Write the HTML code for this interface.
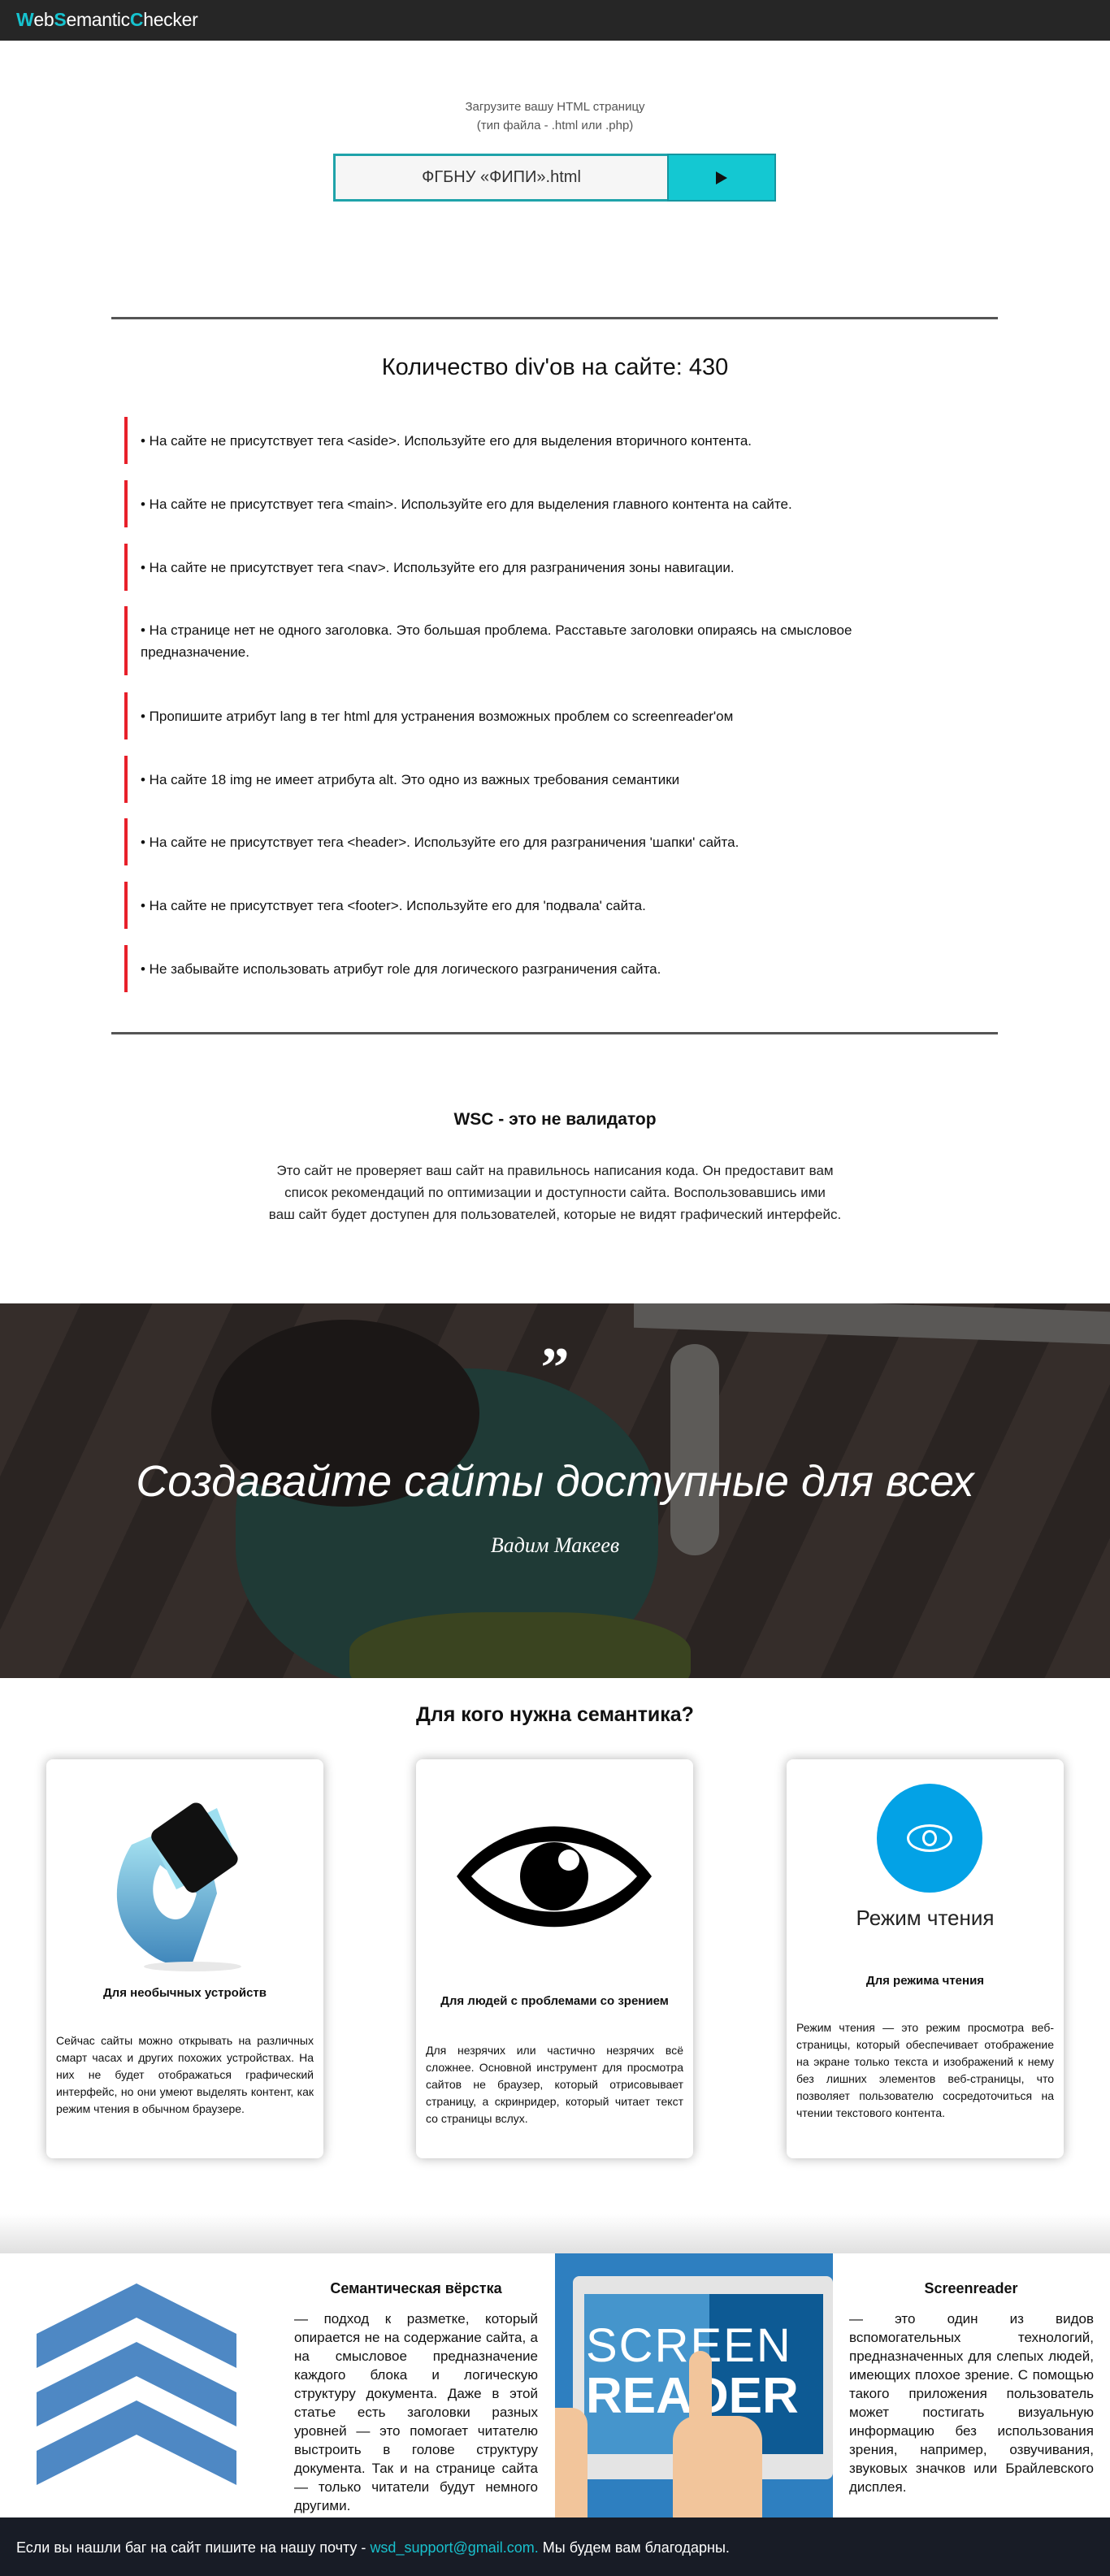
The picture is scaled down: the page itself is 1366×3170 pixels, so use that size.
<!DOCTYPE html>
<html><head><meta charset="utf-8">
<style>
*{margin:0;padding:0;box-sizing:border-box}
body{width:1366px;height:3170px;position:relative;font-family:"Liberation Sans","Noto Sans CJK SC",sans-serif;color:#111;background:#fff;overflow:hidden}
.abs{position:absolute}
.hdr{left:0;top:0;width:1366px;height:50px;background:#262626}
.logo{left:20px;top:11px;font-size:23px;color:#fff;letter-spacing:-0.3px}
.logo b{color:#16c3cf;font-weight:bold}
.c{text-align:center}
.item{left:153px;width:1000px;border-left:4px solid #e8202a;padding-left:16px;font-size:17px;display:flex;align-items:center;line-height:27px}
.card{width:341px;height:491px;background:#fff;border-radius:8px;box-shadow:0 0 14px rgba(0,0,0,.3)}
.ctitle{font-weight:bold;font-size:15px;text-align:center;position:absolute;left:0;width:100%}
.ctext{position:absolute;left:12px;right:12px;font-size:14px;line-height:21px;text-align:justify}
.jt{font-size:17px;line-height:23px;text-align:justify}
</style></head><body>
<div class="abs hdr"></div>
<div class="abs logo"><b>W</b>eb<b>S</b>emantic<b>C</b>hecker</div>

<div class="abs c" style="left:0;width:1366px;top:120px;font-size:15px;color:#555;line-height:23px">Загрузите вашу HTML страницу<br>(тип файла - .html или .php)</div>
<div class="abs" style="left:410px;top:189px;width:411px;height:59px;background:#f6f6f6;border:3px solid #1fa3aa;border-right:none;text-align:center;line-height:53px;font-size:20px;color:#333">ФГБНУ «ФИПИ».html</div>
<div class="abs" style="left:821px;top:189px;width:134px;height:59px;background:#14c8d2;border:2px solid #1596a0"><div style="position:absolute;left:58px;top:20px;border-left:14px solid #111;border-top:8px solid transparent;border-bottom:8px solid transparent"></div></div>

<div class="abs" style="left:137px;top:390px;width:1091px;height:3px;background:#555"></div>
<div class="abs c" style="left:0;width:1366px;top:436px;font-size:29px">Количество div'ов на сайте: 430</div>

<div class="abs item" style="top:513px;height:58px">• На сайте не присутствует тега &lt;aside&gt;. Используйте его для выделения вторичного контента.</div>
<div class="abs item" style="top:591px;height:58px">• На сайте не присутствует тега &lt;main&gt;. Используйте его для выделения главного контента на сайте.</div>
<div class="abs item" style="top:669px;height:58px">• На сайте не присутствует тега &lt;nav&gt;. Используйте его для разграничения зоны навигации.</div>
<div class="abs item" style="top:746px;height:85px;width:960px">• На странице нет не одного заголовка. Это большая проблема. Расставьте заголовки опираясь на смысловое предназначение.</div>
<div class="abs item" style="top:852px;height:58px">• Пропишите атрибут lang в тег html для устранения возможных проблем со screenreader'ом</div>
<div class="abs item" style="top:930px;height:58px">• На сайте 18 img не имеет атрибута alt. Это одно из важных требования семантики</div>
<div class="abs item" style="top:1007px;height:58px">• На сайте не присутствует тега &lt;header&gt;. Используйте его для разграничения 'шапки' сайта.</div>
<div class="abs item" style="top:1085px;height:58px">• На сайте не присутствует тега &lt;footer&gt;. Используйте его для 'подвала' сайта.</div>
<div class="abs item" style="top:1163px;height:58px">• Не забывайте использовать атрибут role для логического разграничения сайта.</div>
<div class="abs" style="left:137px;top:1270px;width:1091px;height:3px;background:#555"></div>

<div class="abs c" style="left:0;width:1366px;top:1366px;font-size:21px;font-weight:bold">WSC - это не валидатор</div>
<div class="abs c" style="left:0;width:1366px;top:1427px;font-size:17px;line-height:27px;color:#222">Это сайт не проверяет ваш сайт на правильнось написания кода. Он предоставит вам<br>список рекомендаций по оптимизации и доступности сайта. Воспользовавшись ими<br>ваш сайт будет доступен для пользователей, которые не видят графический интерфейс.</div>

<div class="abs" style="left:0;top:1604px;width:1366px;height:461px;background:#2e2826;overflow:hidden">
 <div class="abs" style="left:0;top:0;width:1366px;height:461px;background:repeating-linear-gradient(115deg,#352d2a 0 90px,#2a2422 90px 170px)"></div>
 <div class="abs" style="left:780px;top:0;width:586px;height:40px;background:#5a5856;transform:skewY(2deg)"></div>
 <div class="abs" style="left:290px;top:80px;width:520px;height:400px;border-radius:45%;background:#1f3a36"></div>
 <div class="abs" style="left:260px;top:20px;width:330px;height:230px;border-radius:50%;background:#1b1716"></div>
 <div class="abs" style="left:430px;top:380px;width:420px;height:120px;border-radius:40%;background:#3a4420"></div>
 <div class="abs" style="left:825px;top:50px;width:60px;height:260px;border-radius:30px;background:#5d5b58"></div>
 <div class="abs c" style="left:0;width:1366px;top:40px;color:#fff;font-size:70px;font-family:'Liberation Serif',serif;font-weight:bold">”</div>
 <div class="abs c" style="left:0;width:1366px;top:188px;color:#fff;font-size:54px;font-style:italic">Создавайте сайты доступные для всех</div>
 <div class="abs c" style="left:0;width:1366px;top:283px;color:#fff;font-size:26px;font-style:italic;font-family:'Liberation Serif',serif">Вадим Макеев</div>
</div>

<div class="abs c" style="left:0;width:1366px;top:2096px;font-size:25px;font-weight:bold">Для кого нужна семантика?</div>

<div class="abs card" style="left:57px;top:2165px">
 <svg class="abs" style="left:60px;top:45px" width="220" height="220" viewBox="0 0 220 220">
  <defs><linearGradient id="g" x1="0" y1="0" x2="0" y2="1"><stop offset="0" stop-color="#a8e4f2"/><stop offset="1" stop-color="#3f86bb"/></linearGradient></defs>
  <path d="M45 60 C20 100 20 150 50 180 C70 200 95 215 120 205 L150 120 C140 60 110 40 80 45 Z" fill="url(#g)"/>
  <path d="M80 85 C65 110 70 140 90 150 C110 158 120 140 125 120 Z" fill="#fff"/>
  <path d="M70 55 L150 15 L175 80 L100 115 Z" fill="#9edff0"/>
  <rect x="85" y="18" width="75" height="92" rx="10" transform="rotate(-35 122 64)" fill="#111"/>
  <ellipse cx="120" cy="210" rx="60" ry="6" fill="#e8e8e8"/>
 </svg>
 <div class="ctitle" style="top:279px">Для необычных устройств</div>
 <div class="ctext" style="top:336px">Сейчас сайты можно открывать на различных смарт часах и других похожих устройствах. На них не будет отображаться графический интерфейс, но они умеют выделять контент, как режим чтения в обычном браузере.</div>
</div>

<div class="abs card" style="left:512px;top:2165px">
 <svg class="abs" style="left:50px;top:82px" width="240" height="125" viewBox="0 0 240 125">
  <path d="M0 62 C60 -20 180 -20 240 62 C180 145 60 145 0 62 Z" fill="#000"/>
  <path d="M18 62 C70 5 170 5 222 62 C170 120 70 120 18 62 Z" fill="#fff"/>
  <circle cx="120" cy="62" r="42" fill="#000"/>
  <circle cx="138" cy="42" r="13" fill="#fff"/>
 </svg>
 <div class="ctitle" style="top:289px">Для людей с проблемами со зрением</div>
 <div class="ctext" style="top:348px">Для незрячих или частично незрячих всё сложнее. Основной инструмент для просмотра сайтов не браузер, который отрисовывает страницу, а скринридер, который читает текст со страницы вслух.</div>
</div>

<div class="abs card" style="left:968px;top:2165px">
 <div class="abs" style="left:111px;top:30px;width:130px;height:134px;border-radius:50%;background:#03a2e6"></div>
 <div class="abs" style="left:148px;top:80px;width:56px;height:34px;border:3px solid #fff;border-radius:50%"></div>
 <div class="abs" style="left:167px;top:87px;width:18px;height:20px;border:3px solid #fff;border-radius:50%"></div>
 <div class="abs c" style="left:0;width:341px;top:180px;font-size:26px;color:#222">Режим чтения</div>
 <div class="ctitle" style="top:264px">Для режима чтения</div>
 <div class="ctext" style="top:320px">Режим чтения — это режим просмотра веб-страницы, который обеспечивает отображение на экране только текста и изображений к нему без лишних элементов веб-страницы, что позволяет пользователю сосредоточиться на чтении текстового контента.</div>
</div>

<div class="abs" style="left:0;top:2725px;width:1366px;height:48px;background:linear-gradient(#fff,#e0e0e0)"></div>
<svg class="abs" style="left:45px;top:2810px" width="246" height="250" viewBox="0 0 246 250">
 <g fill="#4e88c4">
  <path d="M0 62 L123 0 L246 62 L246 104 L123 42 L0 104 Z"/>
  <path d="M0 62 L123 0 L246 62 L246 104 L123 42 L0 104 Z" transform="translate(0 72)"/>
  <path d="M0 62 L123 0 L246 62 L246 104 L123 42 L0 104 Z" transform="translate(0 144)"/>
 </g>
</svg>
<div class="abs c" style="left:362px;width:300px;top:2806px;font-size:18px;font-weight:bold">Семантическая вёрстка</div>
<div class="abs jt" style="left:362px;width:300px;top:2842px">— подход к разметке, который опирается не на содержание сайта, а на смысловое предназначение каждого блока и логическую структуру документа. Даже в этой статье есть заголовки разных уровней — это помогает читателю выстроить в голове структуру документа. Так и на странице сайта — только читатели будут немного другими.</div>

<div class="abs" style="left:683px;top:2773px;width:342px;height:325px;background:#2e7fc0;overflow:hidden">
 <div class="abs" style="left:22px;top:28px;width:320px;height:250px;background:#e4e4e4;border-radius:8px"></div>
 <div class="abs" style="left:36px;top:50px;width:294px;height:197px;background:#4595cc"></div>
 <div class="abs" style="left:190px;top:50px;width:140px;height:197px;background:#0d5a94"></div>
 <div class="abs" style="left:38px;top:80px;font-size:58px;color:#fff;letter-spacing:2px;font-weight:300">SCREEN</div>
 <div class="abs" style="left:38px;top:140px;font-size:62px;color:#fff;font-weight:bold">READER</div>
 <div class="abs" style="left:165px;top:120px;width:28px;height:220px;background:#f2c59b;border-radius:14px"></div>
 <div class="abs" style="left:145px;top:200px;width:110px;height:130px;background:#f2c59b;border-radius:30px 30px 0 0"></div>
 <div class="abs" style="left:0;top:190px;width:40px;height:140px;background:#f2c59b;border-radius:0 20px 0 0"></div>
</div>

<div class="abs c" style="left:1045px;width:300px;top:2806px;font-size:18px;font-weight:bold">Screenreader</div>
<div class="abs jt" style="left:1045px;width:301px;top:2842px">— это один из видов вспомогательных технологий, предназначенных для слепых людей, имеющих плохое зрение. С помощью такого приложения пользователь может постигать визуальную информацию без использования зрения, например, озвучивания, звуковых значков или Брайлевского дисплея.</div>

<div class="abs" style="left:0;top:3098px;width:1366px;height:72px;background:#181c26"></div>
<div class="abs" style="left:20px;top:3125px;font-size:18px;color:#fff">Если вы нашли баг на сайт пишите на нашу почту - <span style="color:#19c0cc">wsd_support@gmail.com.</span> Мы будем вам благодарны.</div>
</body></html>
